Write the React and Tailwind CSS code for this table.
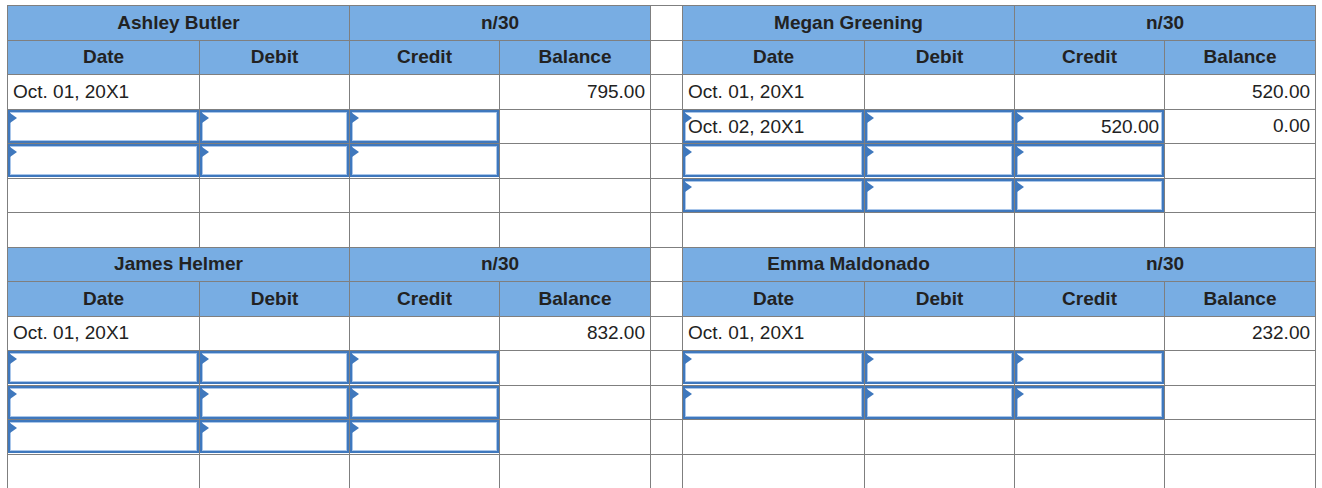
const ledgers = [
  [
    {
      name: 'Ashley Butler',
      terms: 'n/30',
      rows: [
        { date: 'Oct. 01, 20X1', balance: '795.00' },
        { input: true },
        { input: true },
        {},
        {},
      ],
    },
    {
      name: 'Megan Greening',
      terms: 'n/30',
      rows: [
        { date: 'Oct. 01, 20X1', balance: '520.00' },
        { input: true, date: 'Oct. 02, 20X1', credit: '520.00', balance: '0.00' },
        { input: true },
        { input: true },
        {},
      ],
    },
  ],
  [
    {
      name: 'James Helmer',
      terms: 'n/30',
      rows: [
        { date: 'Oct. 01, 20X1', balance: '832.00' },
        { input: true },
        { input: true },
        { input: true },
        {},
      ],
    },
    {
      name: 'Emma Maldonado',
      terms: 'n/30',
      rows: [
        { date: 'Oct. 01, 20X1', balance: '232.00' },
        { input: true },
        { input: true },
        {},
        {},
      ],
    },
  ],
];

const cell = 'border border-[#7f7f7f] p-0 h-[34.5px]';
const head = `${cell} bg-[#78ade3] text-center font-bold text-[#222]`;

const InputBox = ({ value, align = 'left' }) => (
  <div className="relative h-[33px] border-2 border-[#3f78bd] shadow-[inset_0_0_0_1px_#a9c6ea] bg-white">
    <span className="absolute left-0 top-[1px] h-0 w-0 border-y-[5px] border-l-[7px] border-y-transparent border-l-[#3f78bd]" />
    {value && (
      <div className={`px-[3px] leading-[29px] ${align === 'right' ? 'text-right' : 'text-left'}`}>{value}</div>
    )}
  </div>
);

const Cells = ({ row }) => {
  if (row.input) {
    return (
      <>
        <td className={cell}><InputBox value={row.date} /></td>
        <td className={cell}><InputBox /></td>
        <td className={cell}><InputBox value={row.credit} align="right" /></td>
        <td className={`${cell} px-[5px] text-right`}>{row.balance}</td>
      </>
    );
  }
  return (
    <>
      <td className={`${cell} px-[5px]`}>{row.date}</td>
      <td className={cell}></td>
      <td className={cell}></td>
      <td className={`${cell} px-[5px] text-right`}>{row.balance}</td>
    </>
  );
};

export default function App() {
  return (
    <div className="min-h-screen bg-white pl-[7px] pt-[5px] text-[19px] text-[#222]" style={{ fontFamily: '"Liberation Sans", Arial, sans-serif' }}>
      <table className="table-fixed border-collapse w-[1308px]">
        <colgroup>
          <col className="w-[192px]" />
          <col className="w-[150px]" />
          <col className="w-[150px]" />
          <col className="w-[151px]" />
          <col className="w-[32px]" />
          <col className="w-[182px]" />
          <col className="w-[150px]" />
          <col className="w-[150px]" />
          <col className="w-[151px]" />
        </colgroup>
        <tbody>
          {ledgers.map(([left, right], i) => {
            const body = left.rows.map((row, r) => (
              <tr key={`${i}-${r}`}>
                <Cells row={row} />
                <td className={cell}></td>
                <Cells row={right.rows[r]} />
              </tr>
            ));
            return [
              <tr key={`${i}-a`}>
                <td colSpan={2} className={head}>{left.name}</td>
                <td colSpan={2} className={head}>{left.terms}</td>
                <td className={cell}></td>
                <td colSpan={2} className={head}>{right.name}</td>
                <td colSpan={2} className={head}>{right.terms}</td>
              </tr>,
              <tr key={`${i}-b`}>
                {['Date', 'Debit', 'Credit', 'Balance'].map((h) => (
                  <td key={`l${h}`} className={head}>{h}</td>
                ))}
                <td className={cell}></td>
                {['Date', 'Debit', 'Credit', 'Balance'].map((h) => (
                  <td key={`r${h}`} className={head}>{h}</td>
                ))}
              </tr>,
              ...body,
            ];
          })}
        </tbody>
      </table>
    </div>
  );
}
